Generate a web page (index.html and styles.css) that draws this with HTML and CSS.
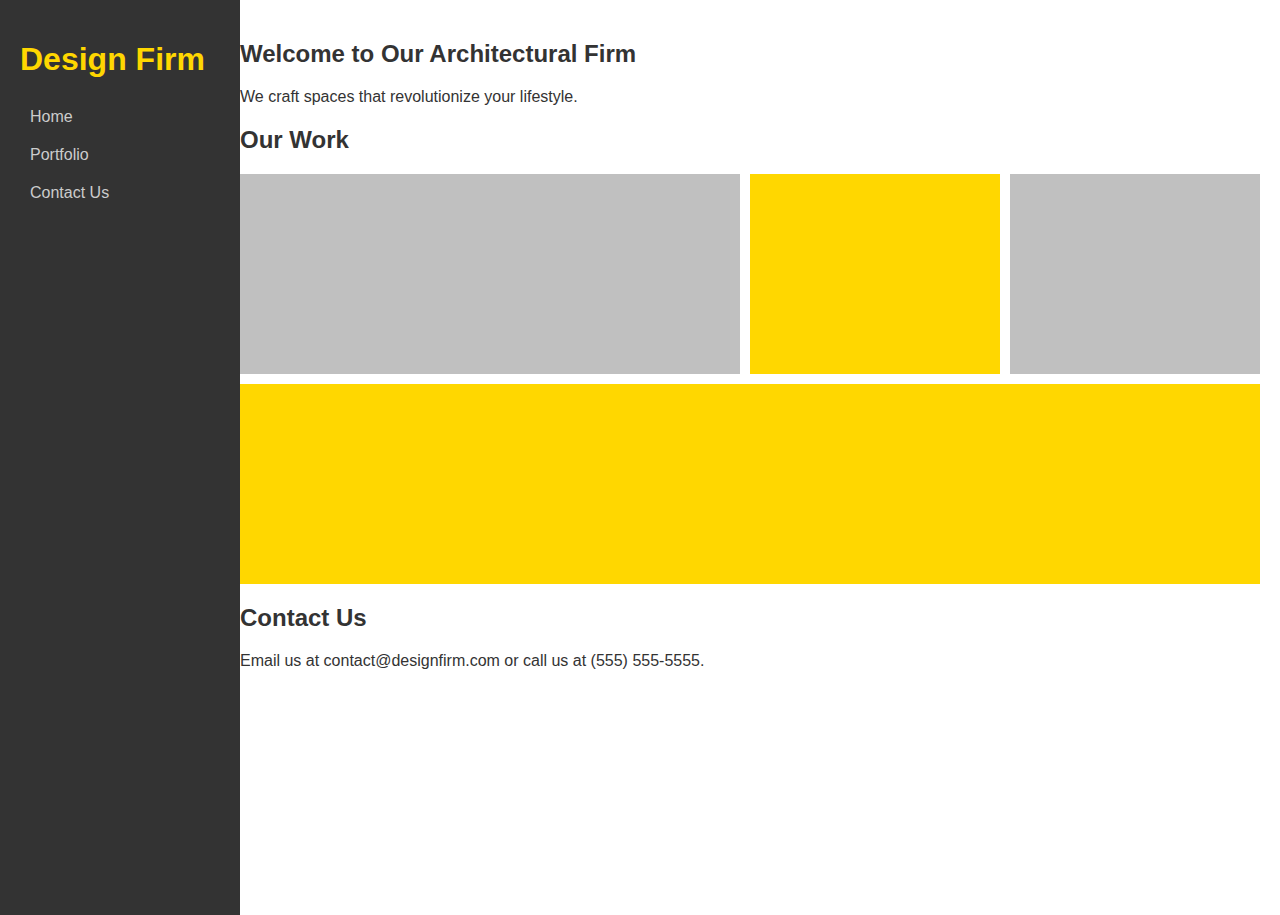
FILE: index.html
```html
<!DOCTYPE html>
<html lang="en">
<head>
<meta charset="utf-8">
<title>Design Firm</title>
<link rel="stylesheet" href="styles.css">
</head>
<body>
<div class="page">
  <aside class="sidebar">
    <h1 class="logo">Design Firm</h1>
    <ul class="nav">
      <li><a href="#">Home</a></li>
      <li><a href="#">Portfolio</a></li>
      <li><a href="#">Contact Us</a></li>
    </ul>
  </aside>
  <main class="main">
    <h1 class="title">Welcome to Our Architectural Firm</h1>
    <p class="text">We craft spaces that revolutionize your lifestyle.</p>
    <h2 class="heading">Our Work</h2>
    <div class="grid">
      <div class="tile gray"></div>
      <div class="tile yellow"></div>
      <div class="tile gray"></div>
      <div class="tile yellow wide"></div>
    </div>
    <h2 class="heading">Contact Us</h2>
    <p class="text">Email us at contact@designfirm.com or call us at (555) 555-5555.</p>
  </main>
</div>
</body>
</html>
```
FILE: styles.css
```css
html, body {
  margin: 0;
  padding: 0;
  height: 100%;
}
body {
  font-family: "Liberation Sans", Arial, sans-serif;
  color: #333;
  background: #fff;
}
.page {
  display: flex;
  min-height: 915px;
}
.sidebar {
  width: 240px;
  flex: 0 0 240px;
  box-sizing: border-box;
  background: #333;
  padding: 41px 20px 20px;
}
.logo {
  margin: 0 0 20px;
  font-size: 32px;
  font-weight: bold;
  color: #ffd700;
  line-height: normal;
}
.nav {
  list-style: none;
  margin: 0;
  padding: 0;
}
.nav a {
  display: block;
  padding: 10px 10px;
  font-size: 16px;
  color: #ccc;
  text-decoration: none;
}
.main {
  flex: 1;
  padding: 20px 20px 20px 0;
}
.title {
  font-size: 24px;
  margin: 20px 0;
}
.heading {
  font-size: 24px;
  margin: 20px 0;
}
.text {
  font-size: 16px;
  margin: 16px 0;
}
.grid {
  display: grid;
  grid-template-columns: 2fr 1fr 1fr;
  grid-auto-rows: 200px;
  gap: 10px;
  margin-top: 20px;
}
.tile.gray {
  background: #c0c0c0;
}
.tile.yellow {
  background: #ffd700;
}
.tile.wide {
  grid-column: 1 / -1;
}
```
